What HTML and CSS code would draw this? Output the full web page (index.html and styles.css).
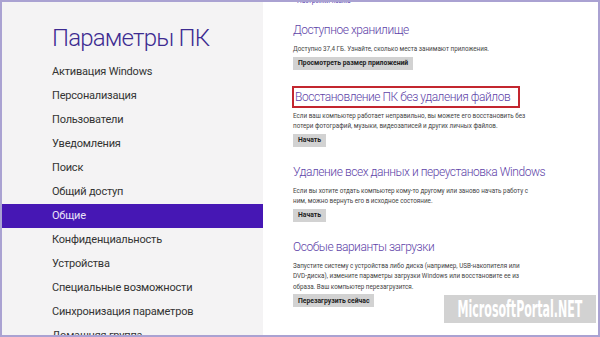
FILE: index.html
```html
<!DOCTYPE html>
<html>
<head>
  <meta charset="UTF-8">
  <title>Параметры ПК</title>
  <link rel="stylesheet" href="styles.css">
</head>
<body>
  <div class="screen">
    <!-- Left menu -->
    <div class="sidebar">
      <h1>Параметры ПК</h1>
      <ul class="menu">
        <li>Активация Windows</li>
        <li>Персонализация</li>
        <li>Пользователи</li>
        <li>Уведомления</li>
        <li>Поиск</li>
        <li>Общий доступ</li>
        <li class="active">Общие</li>
        <li>Конфиденциальность</li>
        <li>Устройства</li>
        <li>Специальные возможности</li>
        <li>Синхронизация параметров</li>
        <li>Домашняя группа</li>
      </ul>
    </div>

    <!-- Settings content -->
    <div class="content">
      <a class="top-link">Настройки языка</a>

      <div class="section">
        <h2>Доступное хранилище</h2>
        <p>Доступно 37,4 ГБ. Узнайте, сколько места занимают приложения.</p>
        <button>Просмотреть размер приложений</button>
      </div>

      <div class="section">
        <h2 class="marked">Восстановление ПК без удаления файлов</h2>
        <p>Если ваш компьютер работает неправильно, вы можете его восстановить без<br>потери фотографий, музыки, видеозаписей и других личных файлов.</p>
        <button>Начать</button>
      </div>

      <div class="section">
        <h2>Удаление всех данных и переустановка Windows</h2>
        <p>Если вы хотите отдать компьютер кому-то другому или заново начать работу с<br>ним, можно вернуть его в исходное состояние.</p>
        <button>Начать</button>
      </div>

      <div class="section">
        <h2>Особые варианты загрузки</h2>
        <p>Запустите систему с устройства либо диска (например, USB-накопителя или<br>DVD-диска), измените параметры загрузки Windows или восстановите ее из<br>образа. Ваш компьютер перезагрузится.</p>
        <button>Перезагрузить сейчас</button>
      </div>
    </div>

    <div class="watermark"><span>MicrosoftPortal.NET</span></div>
  </div>
</body>
</html>
```

FILE: styles.css
```css
* {
  margin: 0;
  padding: 0;
  box-sizing: border-box;
}
body {
  font-family: 'Roboto', sans-serif;
  background: #ffffff;
}
.screen {
  position: relative;
  width: 600px;
  height: 337px;
  border: 2px solid #aaa2d2;
  display: flex;
  overflow: hidden;
  background: #ffffff;
}

/* Left menu */
.sidebar {
  width: 261px;
  flex-shrink: 0;
  background: #f4f3f4;
}
.sidebar h1 {
  font-weight: 300;
  font-size: 24px;
  letter-spacing: -0.8px;
  line-height: 30px;
  color: #3d2b91;
  padding: 21px 0 0 50px;
  height: 58px;
  white-space: nowrap;
}
.menu {
  list-style: none;
}
.menu li {
  height: 24px;
  line-height: 24px;
  padding-left: 50px;
  font-size: 11px;
  letter-spacing: -0.2px;
  color: #333333;
  white-space: nowrap;
}
.menu li.active {
  background: #4617b4;
  color: #e8e2f8;
}

/* Right content */
.content {
  flex: 1;
  padding-left: 30px;
}
.top-link {
  display: block;
  font-size: 6.5px;
  line-height: 8px;
  margin-top: -5px;
  padding-left: 4px;
  color: #5a42b0;
}
.section {
  margin-top: 16px;
}
.section h2 {
  font-weight: 300;
  font-size: 12px;
  letter-spacing: -0.45px;
  line-height: 18px;
  color: #5e43a8;
  margin-bottom: 5px;
  white-space: nowrap;
}
.section h2.marked {
  display: inline-block;
  outline: 2px solid #c3262f;
  margin-left: 1px;
  padding: 0 8px 0 1px;
}
.section p {
  font-size: 6.3px;
  line-height: 10.5px;
  color: #444444;
  margin-bottom: 2px;
  white-space: nowrap;
}
.section button {
  display: block;
  font-family: 'Roboto', sans-serif;
  font-size: 6.8px;
  font-weight: 700;
  color: #222222;
  background: #d2d2d2;
  border: none;
  height: 13px;
  padding: 0 5px;
}

/* Site watermark over the screenshot */
.watermark {
  position: absolute;
  right: 2px;
  bottom: 12px;
  width: 152px;
  height: 28px;
  background: rgba(205, 205, 205, 0.9);
  color: #ffffff;
  font-family: 'DejaVu Sans', sans-serif;
  font-weight: 700;
  font-size: 23px;
  line-height: 28px;
  display: flex;
  justify-content: center;
  overflow: hidden;
}
.watermark span {
  flex-shrink: 0;
  transform: scaleX(0.48);
}
```
